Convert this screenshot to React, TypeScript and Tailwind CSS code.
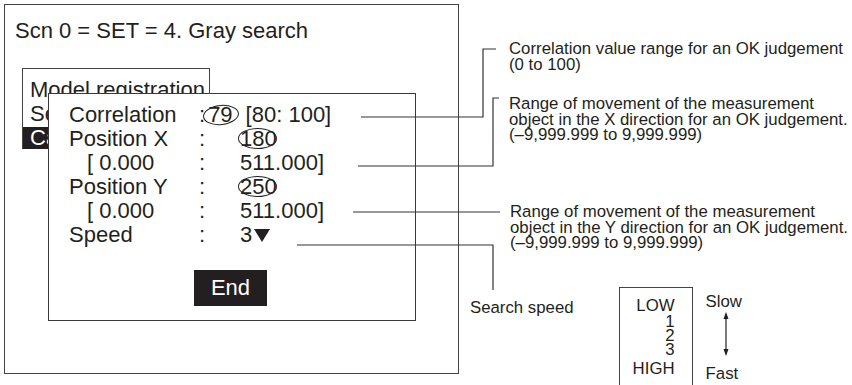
import type { ReactNode } from "react";

function Circled({
  children,
  ring,
}: {
  children: ReactNode;
  ring: string;
}) {
  return (
    <span className="relative inline-block">
      {children}
      <span className={`absolute rounded-[50%] border border-[#231f20] ${ring}`} />
    </span>
  );
}

function SettingsDialog() {
  return (
    <div className="absolute left-[43px] top-[88px] h-[228px] w-[368px] border border-[#3a3a3a] bg-white">
      <div className="grid grid-cols-[130px_41px_auto] pl-[20px] pt-[9px] text-[22px] leading-[24px] whitespace-nowrap">
        <span>Correlation</span>
        <span className="col-span-2">
          :
          <span className="ml-[3px]">
            <Circled ring="-left-[5px] top-[2px] h-[20px] w-[36px] -rotate-6">79</Circled>
          </span>
          <span className="ml-[13px]">[80: 100]</span>
        </span>

        <span>Position X</span>
        <span>:</span>
        <span>
          <Circled ring="-left-[2px] top-[1px] h-[21px] w-[39px]">180</Circled>
        </span>

        <span className="pl-[18px]">[ 0.000</span>
        <span>:</span>
        <span>511.000]</span>

        <span>Position Y</span>
        <span>:</span>
        <span>
          <Circled ring="-left-[2px] top-[1px] h-[21px] w-[39px]">250</Circled>
        </span>

        <span className="pl-[18px]">[ 0.000</span>
        <span>:</span>
        <span>511.000]</span>

        <span>Speed</span>
        <span>:</span>
        <span>
          3
          <svg width="16" height="13" viewBox="0 0 16 13" className="ml-[2px] inline-block align-baseline">
            <path d="M0 0 H16 L8 13 Z" fill="#231f20" />
          </svg>
        </span>
      </div>

      <div className="ml-[145px] mt-[23px] h-[36px] w-[73px] bg-[#231f20] text-center text-[22px] leading-[36px] text-white">
        End
      </div>
    </div>
  );
}

function ScreenPanel() {
  return (
    <div className="relative ml-[4px] mt-[4px] h-[370px] w-[455px] shrink-0 border border-[#444]">
      <p className="pl-[10px] pt-[14px] text-[22px] leading-[24px] whitespace-nowrap">
        Scn 0 = SET = 4. Gray search
      </p>

      {/* menu that sits under the dialog */}
      <div className="ml-[17px] mt-[25px] w-[188px] overflow-hidden border-x border-t border-[#444] pt-[9px] text-[22px] leading-[24px] whitespace-nowrap">
        <div className="pl-[7px]">Model registration</div>
        <div className="pl-[7px]">Search conditions</div>
        <div className="mt-[1px] h-[22px] bg-[#231f20] pl-[7px] leading-[22px] text-white">
          Candidate point level
        </div>
      </div>

      <SettingsDialog />
    </div>
  );
}

function Annotations() {
  return (
    <div className="flex flex-col text-[16.8px] leading-[15.5px] whitespace-nowrap">
      <p className="ml-[50px] mt-[41px]">
        Correlation value range for an OK judgement
        <br />
        (0 to 100)
      </p>
      <p className="ml-[50px] mt-[24px]">
        Range of movement of the measurement
        <br />
        object in the X direction for an OK judgement.
        <br />
        (–9,999.999 to 9,999.999)
      </p>
      <p className="ml-[51px] mt-[61.5px]">
        Range of movement of the measurement
        <br />
        object in the Y direction for an OK judgement.
        <br />
        (–9,999.999 to 9,999.999)
      </p>

      <div className="mt-[36.5px] flex">
        <span className="ml-[11px] mt-[13px]">Search speed</span>
        <div className="ml-[45px] flex h-[98px] w-[74px] flex-col items-end border-x border-t border-[#444] pr-[17px] pt-[10px] leading-[14px]">
          <span className="mb-[2px] leading-[15px]">LOW</span>
          <span>1</span>
          <span>2</span>
          <span>3</span>
          <span className="mt-[4px] leading-[15px]">HIGH</span>
        </div>
        <div className="ml-[13px] mt-[7px] flex flex-col">
          <span>Slow</span>
          <svg width="36" height="48" viewBox="0 0 36 48" className="text-[#231f20]">
            <line x1="20" y1="4" x2="20" y2="44" stroke="currentColor" strokeWidth="1.2" />
            <path d="M20 2 L17.5 9 L22.5 9 Z" fill="currentColor" />
            <path d="M20 46 L17.5 39 L22.5 39 Z" fill="currentColor" />
          </svg>
          <span className="mt-[8px]">Fast</span>
        </div>
      </div>
    </div>
  );
}

function LeaderLines() {
  return (
    <svg
      className="pointer-events-none absolute left-0 top-0"
      width="852"
      height="385"
      viewBox="0 0 852 385"
      fill="none"
      stroke="#333"
      strokeWidth="1.2"
    >
      <path d="M361 117 H483 V49 H496" />
      <path d="M358 166 H493 V98 H499" />
      <path d="M353 212 H500" />
      <path d="M297 245 H493 V290" />
    </svg>
  );
}

export default function App() {
  return (
    <div className="relative h-[385px] w-[852px] overflow-hidden bg-white font-['Liberation_Sans',Arial,sans-serif] text-[#231f20]">
      <div className="flex">
        <ScreenPanel />
        <Annotations />
      </div>
      <LeaderLines />
    </div>
  );
}
